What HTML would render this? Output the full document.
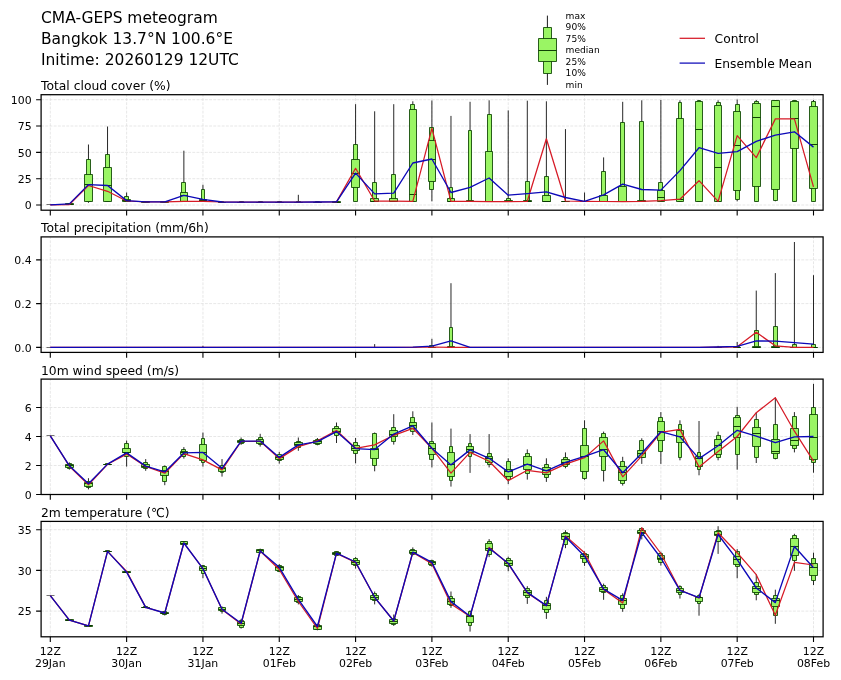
<!DOCTYPE html>
<html lang="en"><head><meta charset="utf-8"><title>CMA-GEPS meteogram</title>
<style>html,body{margin:0;padding:0;background:#fff}svg{display:block;will-change:transform}</style>
</head><body>
<svg width="841" height="680" viewBox="0 0 841 680" font-family='"DejaVu Sans","Liberation Sans",sans-serif'>
<rect width="841" height="680" fill="#fff"/>
<text x="41" y="22.8" font-size="15.48" fill="#000">CMA-GEPS meteogram</text>
<text x="41" y="43.7" font-size="15.48" fill="#000">Bangkok 13.7°N 100.6°E</text>
<text x="41" y="64.6" font-size="15.48" fill="#000">Initime: 20260129 12UTC</text>
<line x1="547.4" x2="547.4" y1="15.6" y2="84.9" stroke="#000" stroke-width="0.9"/>
<path d="M543.5 27.5H551.5V73.5H543.5Z" fill="#9af564" stroke="#0a4200" stroke-opacity="0.85" stroke-width="1"/>
<path d="M538.5 38.5H556.5V61.5H538.5Z" fill="#9af564" stroke="#0a4200" stroke-opacity="0.85" stroke-width="1"/>
<path d="M538.5 50.5H556.5" fill="none" stroke="#083800" stroke-opacity="0.95" stroke-width="1"/>
<text x="565.6" y="18.5" font-size="9.1" fill="#000">max</text>
<text x="565.6" y="30.0" font-size="9.1" fill="#000">90%</text>
<text x="565.6" y="41.6" font-size="9.1" fill="#000">75%</text>
<text x="565.6" y="53.1" font-size="9.1" fill="#000">median</text>
<text x="565.6" y="64.7" font-size="9.1" fill="#000">25%</text>
<text x="565.6" y="76.2" font-size="9.1" fill="#000">10%</text>
<text x="565.6" y="87.8" font-size="9.1" fill="#000">min</text>
<line x1="679.6" x2="705.0" y1="38.3" y2="38.3" stroke="#d61a26" stroke-width="1.25"/>
<line x1="679.6" x2="705.0" y1="63.1" y2="63.1" stroke="#0c08b8" stroke-width="1.25"/>
<text x="714.6" y="42.9" font-size="12.25" fill="#000">Control</text>
<text x="714.6" y="67.5" font-size="12.25" fill="#000">Ensemble Mean</text>
<g>
<text x="41" y="89.6" font-size="12.33" fill="#000">Total cloud cover (%)</text>
<path d="M50.30 210.15V94.7M126.62 210.15V94.7M202.94 210.15V94.7M279.26 210.15V94.7M355.58 210.15V94.7M431.90 210.15V94.7M508.22 210.15V94.7M584.54 210.15V94.7M660.86 210.15V94.7M737.18 210.15V94.7M813.50 210.15V94.7M41.1 205.0H823.15M41.1 178.7H823.15M41.1 152.35H823.15M41.1 126.0H823.15M41.1 99.7H823.15" stroke="#d6d6d6" stroke-width="0.6" stroke-dasharray="2.9 1.3" fill="none"/>
<path d="M69.38 203.3V204.9M88.46 144.5V202.8M107.54 126.5V201.9M126.62 192.5V201.6M145.70 201.3V202.3M164.78 201.3V202.3M183.86 150.7V201.6M202.94 184.8V201.6M222.02 201.5V202.4M241.10 201.1V202.4M260.18 201.1V202.4M279.26 201.1V202.4M298.34 194.8V202.4M317.42 201.5V202.4M336.50 201.5V202.4M355.58 104.2V201.3M374.66 111.3V201.9M393.74 104.2V201.6M412.82 101.3V201.6M431.90 100.5V201.3M450.98 115.9V201.6M470.06 101.8V201.6M489.14 100.3V201.6M508.22 110.4V201.6M527.30 100.7V201.7M546.38 101.3V201.6M565.46 129.1V201.8M584.54 192.5V201.8M603.62 157.4V201.6M622.70 101.8V201.6M641.78 100.3V201.6M660.86 100.0V201.6M679.94 100.3V201.9M699.02 100.3V201.6M718.10 100.3V201.6M737.18 99.5V201.3M756.26 100.0V201.6M775.34 100.0V201.3M794.42 100.3V201.6M813.50 100.0V201.6" stroke="#000" stroke-width="0.85" fill="none"/>
<path d="M67.5 203.5H71.5V204.5H67.5ZM86.5 159.5H90.5V201.5H86.5ZM105.5 154.5H109.5V201.5H105.5ZM124.5 196.5H128.5V201.5H124.5ZM143.5 201.5H147.5V202.5H143.5ZM162.5 201.5H166.5V202.5H162.5ZM181.5 182.5H185.5V201.5H181.5ZM201.5 189.5H204.5V201.5H201.5ZM220.5 201.5H223.5V202.5H220.5ZM239.5 201.5H243.5V202.5H239.5ZM258.5 201.5H262.5V202.5H258.5ZM277.5 201.5H281.5V202.5H277.5ZM296.5 201.5H300.5V202.5H296.5ZM315.5 201.5H319.5V202.5H315.5ZM334.5 201.5H338.5V202.5H334.5ZM353.5 144.5H357.5V201.5H353.5ZM372.5 182.5H376.5V201.5H372.5ZM391.5 174.5H395.5V201.5H391.5ZM410.5 104.5H414.5V201.5H410.5ZM429.5 127.5H433.5V189.5H429.5ZM449.5 187.5H452.5V201.5H449.5ZM468.5 130.5H471.5V201.5H468.5ZM487.5 114.5H491.5V201.5H487.5ZM506.5 198.5H510.5V201.5H506.5ZM525.5 181.5H529.5V201.5H525.5ZM544.5 176.5H548.5V201.5H544.5ZM563.5 201.5H567.5V201.5H563.5ZM582.5 201.5H586.5V201.5H582.5ZM601.5 171.5H605.5V201.5H601.5ZM620.5 122.5H624.5V201.5H620.5ZM639.5 121.5H643.5V201.5H639.5ZM658.5 182.5H662.5V201.5H658.5ZM678.5 102.5H681.5V201.5H678.5ZM697.5 100.5H700.5V201.5H697.5ZM716.5 102.5H720.5V201.5H716.5ZM735.5 104.5H739.5V199.5H735.5ZM754.5 101.5H758.5V201.5H754.5ZM773.5 100.5H777.5V200.5H773.5ZM792.5 100.5H796.5V201.5H792.5ZM811.5 101.5H815.5V201.5H811.5Z" stroke="#0a4200" stroke-opacity="0.85" stroke-width="1" fill="#9af564"/>
<path d="M65.5 203.5H73.5V204.5H65.5ZM84.5 174.5H92.5V201.5H84.5ZM103.5 167.5H111.5V201.5H103.5ZM122.5 199.5H130.5V201.5H122.5ZM141.5 201.5H149.5V202.5H141.5ZM160.5 201.5H168.5V202.5H160.5ZM180.5 192.5H187.5V201.5H180.5ZM199.5 199.5H206.5V201.5H199.5ZM218.5 202.5H225.5V202.5H218.5ZM237.5 202.5H244.5V202.5H237.5ZM256.5 202.5H263.5V202.5H256.5ZM275.5 202.5H283.5V202.5H275.5ZM294.5 202.5H302.5V202.5H294.5ZM313.5 202.5H321.5V202.5H313.5ZM332.5 201.5H340.5V202.5H332.5ZM351.5 159.5H359.5V187.5H351.5ZM370.5 198.5H378.5V201.5H370.5ZM389.5 198.5H397.5V201.5H389.5ZM409.5 109.5H416.5V201.5H409.5ZM428.5 140.5H435.5V181.5H428.5ZM447.5 198.5H454.5V201.5H447.5ZM466.5 200.5H473.5V201.5H466.5ZM485.5 151.5H492.5V201.5H485.5ZM504.5 200.5H512.5V201.5H504.5ZM523.5 200.5H531.5V201.5H523.5ZM542.5 195.5H550.5V201.5H542.5ZM561.5 201.5H569.5V201.5H561.5ZM580.5 201.5H588.5V201.5H580.5ZM599.5 195.5H607.5V201.5H599.5ZM618.5 186.5H626.5V201.5H618.5ZM637.5 200.5H645.5V201.5H637.5ZM657.5 190.5H664.5V201.5H657.5ZM676.5 118.5H683.5V201.5H676.5ZM695.5 101.5H702.5V201.5H695.5ZM714.5 105.5H721.5V201.5H714.5ZM733.5 111.5H740.5V190.5H733.5ZM752.5 103.5H760.5V186.5H752.5ZM771.5 100.5H779.5V189.5H771.5ZM790.5 101.5H798.5V148.5H790.5ZM809.5 106.5H817.5V188.5H809.5Z" stroke="#0a4200" stroke-opacity="0.85" stroke-width="1" fill="#9af564"/>
<path d="M65.5 204.5H73.5M84.5 184.5H92.5M103.5 185.5H111.5M122.5 200.5H130.5M141.5 201.5H149.5M160.5 201.5H168.5M180.5 195.5H187.5M199.5 200.5H206.5M218.5 202.5H225.5M237.5 202.5H244.5M256.5 202.5H263.5M275.5 202.5H283.5M294.5 202.5H302.5M313.5 202.5H321.5M332.5 202.5H340.5M351.5 173.5H359.5M370.5 201.5H378.5M389.5 201.5H397.5M409.5 194.5H416.5M428.5 159.5H435.5M447.5 201.5H454.5M466.5 201.5H473.5M485.5 201.5H492.5M504.5 201.5H512.5M523.5 201.5H531.5M542.5 201.5H550.5M561.5 201.5H569.5M580.5 201.5H588.5M599.5 201.5H607.5M618.5 201.5H626.5M637.5 201.5H645.5M657.5 197.5H664.5M676.5 199.5H683.5M695.5 129.5H702.5M714.5 167.5H721.5M733.5 145.5H740.5M752.5 117.5H760.5M771.5 106.5H779.5M790.5 118.5H798.5M809.5 144.5H817.5" stroke="#083800" stroke-opacity="0.95" stroke-width="1" fill="none"/>
<path d="M46.5 204.5H54.5" stroke="#000" stroke-opacity="0.55" stroke-width="1" fill="none"/>
<polyline points="50.30,204.9 69.38,204.6 88.46,185.5 107.54,191.3 126.62,201.0 145.70,201.9 164.78,201.9 183.86,201.3 202.94,201.3 222.02,202.0 241.10,202.1 260.18,202.1 279.26,202.1 298.34,202.1 317.42,202.0 336.50,201.9 355.58,168.3 374.66,201.0 393.74,201.0 412.82,201.3 431.90,128.3 450.98,201.3 470.06,201.3 489.14,201.7 508.22,201.7 527.30,201.3 546.38,138.8 565.46,201.0 584.54,201.3 603.62,201.5 622.70,201.5 641.78,201.3 660.86,200.6 679.94,199.2 699.02,180.7 718.10,201.3 737.18,135.7 756.26,157.7 775.34,118.9 794.42,118.9 813.50,186.9" stroke="#d61a26" stroke-width="1.25" fill="none" stroke-linejoin="round"/>
<polyline points="50.30,204.9 69.38,203.9 88.46,184.6 107.54,185.5 126.62,200.6 145.70,201.9 164.78,201.9 183.86,195.3 202.94,199.3 222.02,202.0 241.10,202.1 260.18,202.1 279.26,202.1 298.34,202.1 317.42,202.0 336.50,201.9 355.58,173.1 374.66,193.9 393.74,193.1 412.82,163.0 431.90,159.0 450.98,192.5 470.06,187.4 489.14,178.0 508.22,195.2 527.30,193.6 546.38,191.8 565.46,197.5 584.54,201.3 603.62,194.8 622.70,184.2 641.78,189.5 660.86,190.1 679.94,170.6 699.02,147.7 718.10,153.3 737.18,151.6 756.26,141.3 775.34,135.1 794.42,131.8 813.50,147.1" stroke="#0c08b8" stroke-width="1.35" fill="none" stroke-linejoin="round"/>
<rect x="41.1" y="94.7" width="782.0" height="115.5" fill="none" stroke="#000" stroke-width="1.25"/>
<path d="M50.30 210.15v5.3M126.62 210.15v5.3M202.94 210.15v5.3M279.26 210.15v5.3M355.58 210.15v5.3M431.90 210.15v5.3M508.22 210.15v5.3M584.54 210.15v5.3M660.86 210.15v5.3M737.18 210.15v5.3M813.50 210.15v5.3M41.1 205.0h-5.0M41.1 178.7h-5.0M41.1 152.35h-5.0M41.1 126.0h-5.0M41.1 99.7h-5.0" stroke="#000" stroke-width="1.1" fill="none"/>
<text x="31.6" y="209.2" font-size="10.9" text-anchor="end" fill="#000">0</text>
<text x="31.6" y="182.9" font-size="10.9" text-anchor="end" fill="#000">25</text>
<text x="31.6" y="156.5" font-size="10.9" text-anchor="end" fill="#000">50</text>
<text x="31.6" y="130.2" font-size="10.9" text-anchor="end" fill="#000">75</text>
<text x="31.6" y="103.9" font-size="10.9" text-anchor="end" fill="#000">100</text>
</g>
<g>
<text x="41" y="231.75" font-size="12.33" fill="#000">Total precipitation (mm/6h)</text>
<path d="M50.30 352.4V236.9M126.62 352.4V236.9M202.94 352.4V236.9M279.26 352.4V236.9M355.58 352.4V236.9M431.90 352.4V236.9M508.22 352.4V236.9M584.54 352.4V236.9M660.86 352.4V236.9M737.18 352.4V236.9M813.50 352.4V236.9M41.1 347.4H823.15M41.1 303.6H823.15M41.1 259.9H823.15" stroke="#d6d6d6" stroke-width="0.6" stroke-dasharray="2.9 1.3" fill="none"/>
<path d="M202.94 345.8V347.3M374.66 344.1V347.3M431.90 338.8V347.3M450.98 283.2V347.3M718.10 345.9V347.3M737.18 342.0V347.3M756.26 290.6V347.3M775.34 273.1V347.3M794.42 242.0V347.3M813.50 275.2V347.3" stroke="#000" stroke-width="0.85" fill="none"/>
<path d="M201.5 347.5H204.5V347.5H201.5ZM372.5 347.5H376.5V347.5H372.5ZM429.5 345.5H433.5V347.5H429.5ZM449.5 327.5H452.5V347.5H449.5ZM716.5 347.5H720.5V347.5H716.5ZM735.5 346.5H739.5V347.5H735.5ZM754.5 330.5H758.5V347.5H754.5ZM773.5 326.5H777.5V347.5H773.5ZM792.5 344.5H796.5V347.5H792.5ZM811.5 344.5H815.5V347.5H811.5Z" stroke="#0a4200" stroke-opacity="0.85" stroke-width="1" fill="#9af564"/>
<path d="M199.5 347.5H206.5V347.5H199.5ZM370.5 347.5H378.5V347.5H370.5ZM428.5 347.5H435.5V347.5H428.5ZM447.5 346.5H454.5V347.5H447.5ZM714.5 347.5H721.5V347.5H714.5ZM733.5 347.5H740.5V347.5H733.5ZM752.5 346.5H760.5V347.5H752.5ZM771.5 346.5H779.5V347.5H771.5ZM790.5 347.5H798.5V347.5H790.5ZM809.5 347.5H817.5V347.5H809.5Z" stroke="#0a4200" stroke-opacity="0.85" stroke-width="1" fill="#9af564"/>
<path d="M199.5 347.5H206.5M370.5 347.5H378.5M428.5 347.5H435.5M447.5 347.5H454.5M714.5 347.5H721.5M733.5 347.5H740.5M752.5 347.5H760.5M771.5 347.5H779.5M790.5 347.5H798.5M809.5 347.5H817.5" stroke="#083800" stroke-opacity="0.95" stroke-width="1" fill="none"/>
<path d="M46.5 347.5H54.5M65.5 347.5H73.5M84.5 347.5H92.5M103.5 347.5H111.5M122.5 347.5H130.5M141.5 347.5H149.5M160.5 347.5H168.5M180.5 347.5H187.5M218.5 347.5H225.5M237.5 347.5H244.5M256.5 347.5H263.5M275.5 347.5H283.5M294.5 347.5H302.5M313.5 347.5H321.5M332.5 347.5H340.5M351.5 347.5H359.5M389.5 347.5H397.5M409.5 347.5H416.5M466.5 347.5H473.5M485.5 347.5H492.5M504.5 347.5H512.5M523.5 347.5H531.5M542.5 347.5H550.5M561.5 347.5H569.5M580.5 347.5H588.5M599.5 347.5H607.5M618.5 347.5H626.5M637.5 347.5H645.5M657.5 347.5H664.5M676.5 347.5H683.5M695.5 347.5H702.5" stroke="#000" stroke-opacity="0.55" stroke-width="1" fill="none"/>
<polyline points="50.30,347.3 69.38,347.3 88.46,347.3 107.54,347.3 126.62,347.3 145.70,347.3 164.78,347.3 183.86,347.3 202.94,347.3 222.02,347.3 241.10,347.3 260.18,347.3 279.26,347.3 298.34,347.3 317.42,347.3 336.50,347.3 355.58,347.3 374.66,347.3 393.74,347.3 412.82,347.3 431.90,347.0 450.98,347.3 470.06,347.3 489.14,347.3 508.22,347.3 527.30,347.3 546.38,347.3 565.46,347.3 584.54,347.3 603.62,347.3 622.70,347.3 641.78,347.3 660.86,347.3 679.94,347.3 699.02,347.3 718.10,347.1 737.18,346.8 756.26,332.3 775.34,345.8 794.42,347.3 813.50,347.3" stroke="#d61a26" stroke-width="1.25" fill="none" stroke-linejoin="round"/>
<polyline points="50.30,347.3 69.38,347.3 88.46,347.3 107.54,347.3 126.62,347.3 145.70,347.3 164.78,347.3 183.86,347.3 202.94,347.3 222.02,347.3 241.10,347.3 260.18,347.3 279.26,347.3 298.34,347.3 317.42,347.3 336.50,347.3 355.58,347.3 374.66,347.3 393.74,347.3 412.82,347.1 431.90,346.2 450.98,340.9 470.06,347.3 489.14,347.3 508.22,347.3 527.30,347.3 546.38,347.3 565.46,347.3 584.54,347.3 603.62,347.3 622.70,347.3 641.78,347.3 660.86,347.3 679.94,347.3 699.02,347.3 718.10,347.0 737.18,346.4 756.26,340.9 775.34,341.1 794.42,342.7 813.50,344.1" stroke="#0c08b8" stroke-width="1.35" fill="none" stroke-linejoin="round"/>
<rect x="41.1" y="236.9" width="782.0" height="115.5" fill="none" stroke="#000" stroke-width="1.25"/>
<path d="M50.30 352.4v5.3M126.62 352.4v5.3M202.94 352.4v5.3M279.26 352.4v5.3M355.58 352.4v5.3M431.90 352.4v5.3M508.22 352.4v5.3M584.54 352.4v5.3M660.86 352.4v5.3M737.18 352.4v5.3M813.50 352.4v5.3M41.1 347.4h-5.0M41.1 303.6h-5.0M41.1 259.9h-5.0" stroke="#000" stroke-width="1.1" fill="none"/>
<text x="31.6" y="351.6" font-size="10.9" text-anchor="end" fill="#000">0.0</text>
<text x="31.6" y="307.8" font-size="10.9" text-anchor="end" fill="#000">0.2</text>
<text x="31.6" y="264.1" font-size="10.9" text-anchor="end" fill="#000">0.4</text>
</g>
<g>
<text x="41" y="374.55" font-size="12.33" fill="#000">10m wind speed (m/s)</text>
<path d="M50.30 494.55V379.1M126.62 494.55V379.1M202.94 494.55V379.1M279.26 494.55V379.1M355.58 494.55V379.1M431.90 494.55V379.1M508.22 494.55V379.1M584.54 494.55V379.1M660.86 494.55V379.1M737.18 494.55V379.1M813.50 494.55V379.1M41.1 465.5H823.15M41.1 436.5H823.15M41.1 407.5H823.15" stroke="#d6d6d6" stroke-width="0.6" stroke-dasharray="2.9 1.3" fill="none"/>
<path d="M69.38 462.4V469.6M88.46 478.2V489.4M107.54 463.6V464.8M126.62 440.5V466.6M145.70 459.1V470.8M164.78 465.4V485.2M183.86 447.1V458.6M202.94 432.5V466.6M222.02 459.1V476.6M241.10 437.5V444.9M260.18 433.8V446.6M279.26 451.9V463.6M298.34 437.5V450.8M317.42 438.0V445.3M336.50 422.5V443.0M355.58 438.0V463.3M374.66 432.5V471.3M393.74 414.2V444.6M412.82 411.3V435.0M431.90 422.5V467.4M450.98 428.6V486.6M470.06 434.1V472.9M489.14 434.1V467.4M508.22 458.3V484.1M527.30 449.4V479.6M546.38 458.3V481.9M565.46 452.4V468.3M584.54 420.3V479.8M603.62 431.6V481.5M622.70 456.8V485.6M641.78 438.3V463.9M660.86 412.1V463.9M679.94 420.3V460.3M699.02 421.0V475.3M718.10 431.6V460.3M737.18 406.8V469.7M756.26 412.7V463.0M775.34 397.7V459.4M794.42 412.1V452.4M813.50 383.9V472.7" stroke="#000" stroke-width="0.85" fill="none"/>
<path d="M67.5 463.5H71.5V468.5H67.5ZM86.5 481.5H90.5V487.5H86.5ZM105.5 463.5H109.5V464.5H105.5ZM124.5 443.5H128.5V456.5H124.5ZM143.5 462.5H147.5V468.5H143.5ZM162.5 466.5H166.5V481.5H162.5ZM181.5 449.5H185.5V456.5H181.5ZM201.5 438.5H204.5V462.5H201.5ZM220.5 465.5H223.5V472.5H220.5ZM239.5 439.5H243.5V443.5H239.5ZM258.5 437.5H262.5V444.5H258.5ZM277.5 454.5H281.5V460.5H277.5ZM296.5 441.5H300.5V447.5H296.5ZM315.5 439.5H319.5V444.5H315.5ZM334.5 426.5H338.5V435.5H334.5ZM353.5 442.5H357.5V453.5H353.5ZM372.5 433.5H376.5V465.5H372.5ZM391.5 427.5H395.5V441.5H391.5ZM410.5 417.5H414.5V431.5H410.5ZM429.5 441.5H433.5V459.5H429.5ZM449.5 446.5H452.5V480.5H449.5ZM468.5 443.5H471.5V456.5H468.5ZM487.5 453.5H491.5V464.5H487.5ZM506.5 461.5H510.5V479.5H506.5ZM525.5 453.5H529.5V473.5H525.5ZM544.5 464.5H548.5V477.5H544.5ZM563.5 457.5H567.5V466.5H563.5ZM582.5 428.5H586.5V478.5H582.5ZM601.5 433.5H605.5V470.5H601.5ZM620.5 461.5H624.5V483.5H620.5ZM639.5 440.5H643.5V457.5H639.5ZM658.5 417.5H662.5V451.5H658.5ZM678.5 424.5H681.5V457.5H678.5ZM697.5 452.5H700.5V469.5H697.5ZM716.5 435.5H720.5V457.5H716.5ZM735.5 415.5H739.5V454.5H735.5ZM754.5 419.5H758.5V457.5H754.5ZM773.5 424.5H777.5V458.5H773.5ZM792.5 416.5H796.5V448.5H792.5ZM811.5 407.5H815.5V462.5H811.5Z" stroke="#0a4200" stroke-opacity="0.85" stroke-width="1" fill="#9af564"/>
<path d="M65.5 464.5H73.5V467.5H65.5ZM84.5 482.5H92.5V486.5H84.5ZM103.5 464.5H111.5V464.5H103.5ZM122.5 448.5H130.5V452.5H122.5ZM141.5 464.5H149.5V467.5H141.5ZM160.5 470.5H168.5V475.5H160.5ZM180.5 451.5H187.5V454.5H180.5ZM199.5 444.5H206.5V460.5H199.5ZM218.5 467.5H225.5V471.5H218.5ZM237.5 440.5H244.5V442.5H237.5ZM256.5 439.5H263.5V443.5H256.5ZM275.5 456.5H283.5V459.5H275.5ZM294.5 442.5H302.5V445.5H294.5ZM313.5 440.5H321.5V443.5H313.5ZM332.5 428.5H340.5V432.5H332.5ZM351.5 445.5H359.5V450.5H351.5ZM370.5 448.5H378.5V458.5H370.5ZM389.5 430.5H397.5V436.5H389.5ZM409.5 422.5H416.5V428.5H409.5ZM428.5 443.5H435.5V454.5H428.5ZM447.5 452.5H454.5V476.5H447.5ZM466.5 446.5H473.5V452.5H466.5ZM485.5 456.5H492.5V462.5H485.5ZM504.5 469.5H512.5V476.5H504.5ZM523.5 456.5H531.5V469.5H523.5ZM542.5 467.5H550.5V474.5H542.5ZM561.5 459.5H569.5V464.5H561.5ZM580.5 445.5H588.5V471.5H580.5ZM599.5 437.5H607.5V456.5H599.5ZM618.5 466.5H626.5V480.5H618.5ZM637.5 450.5H645.5V457.5H637.5ZM657.5 421.5H664.5V440.5H657.5ZM676.5 430.5H683.5V442.5H676.5ZM695.5 456.5H702.5V466.5H695.5ZM714.5 439.5H721.5V454.5H714.5ZM733.5 417.5H740.5V437.5H733.5ZM752.5 427.5H760.5V446.5H752.5ZM771.5 439.5H779.5V453.5H771.5ZM790.5 428.5H798.5V445.5H790.5ZM809.5 414.5H817.5V459.5H809.5Z" stroke="#0a4200" stroke-opacity="0.85" stroke-width="1" fill="#9af564"/>
<path d="M65.5 465.5H73.5M84.5 483.5H92.5M103.5 464.5H111.5M122.5 452.5H130.5M141.5 466.5H149.5M160.5 471.5H168.5M180.5 452.5H187.5M199.5 452.5H206.5M218.5 468.5H225.5M237.5 441.5H244.5M256.5 441.5H263.5M275.5 457.5H283.5M294.5 444.5H302.5M313.5 441.5H321.5M332.5 431.5H340.5M351.5 448.5H359.5M370.5 449.5H378.5M389.5 434.5H397.5M409.5 425.5H416.5M428.5 448.5H435.5M447.5 464.5H454.5M466.5 449.5H473.5M485.5 458.5H492.5M504.5 471.5H512.5M523.5 464.5H531.5M542.5 470.5H550.5M561.5 462.5H569.5M580.5 456.5H588.5M599.5 449.5H607.5M618.5 472.5H626.5M637.5 453.5H645.5M657.5 431.5H664.5M676.5 436.5H683.5M695.5 458.5H702.5M714.5 445.5H721.5M733.5 426.5H740.5M752.5 433.5H760.5M771.5 451.5H779.5M790.5 440.5H798.5M809.5 437.5H817.5" stroke="#083800" stroke-opacity="0.95" stroke-width="1" fill="none"/>
<path d="M46.5 435.5H54.5" stroke="#000" stroke-opacity="0.55" stroke-width="1" fill="none"/>
<polyline points="50.30,435.8 69.38,466.2 88.46,484.9 107.54,464.3 126.62,454.1 145.70,466.5 164.78,473.2 183.86,453.6 202.94,459.9 222.02,469.9 241.10,441.5 260.18,441.3 279.26,458.6 298.34,446.6 317.42,440.8 336.50,430.5 355.58,448.3 374.66,444.9 393.74,435.3 412.82,428.3 431.90,448.3 450.98,473.2 470.06,452.4 489.14,461.3 508.22,480.7 527.30,470.3 546.38,472.9 565.46,464.1 584.54,457.7 603.62,440.9 622.70,476.8 641.78,455.9 660.86,432.4 679.94,429.4 699.02,466.9 718.10,451.5 737.18,436.5 756.26,412.7 775.34,397.7 794.42,431.2 813.50,461.2" stroke="#d61a26" stroke-width="1.25" fill="none" stroke-linejoin="round"/>
<polyline points="50.30,435.8 69.38,465.8 88.46,483.7 107.54,464.1 126.62,452.9 145.70,466.1 164.78,471.9 183.86,452.9 202.94,452.4 222.02,468.3 241.10,441.1 260.18,441.1 279.26,457.4 298.34,444.9 317.42,441.6 336.50,431.6 355.58,448.6 374.66,449.6 393.74,434.1 412.82,425.8 431.90,448.3 450.98,464.9 470.06,449.9 489.14,458.3 508.22,471.9 527.30,464.1 546.38,470.8 565.46,462.4 584.54,456.3 603.62,449.7 622.70,472.7 641.78,453.3 660.86,431.7 679.94,436.9 699.02,458.6 718.10,445.7 737.18,430.3 756.26,436.1 775.34,442.7 794.42,436.9 813.50,436.5" stroke="#0c08b8" stroke-width="1.35" fill="none" stroke-linejoin="round"/>
<rect x="41.1" y="379.1" width="782.0" height="115.4" fill="none" stroke="#000" stroke-width="1.25"/>
<path d="M50.30 494.55v5.3M126.62 494.55v5.3M202.94 494.55v5.3M279.26 494.55v5.3M355.58 494.55v5.3M431.90 494.55v5.3M508.22 494.55v5.3M584.54 494.55v5.3M660.86 494.55v5.3M737.18 494.55v5.3M813.50 494.55v5.3M41.1 494.5h-5.0M41.1 465.5h-5.0M41.1 436.5h-5.0M41.1 407.5h-5.0" stroke="#000" stroke-width="1.1" fill="none"/>
<text x="31.6" y="498.7" font-size="10.9" text-anchor="end" fill="#000">0</text>
<text x="31.6" y="469.7" font-size="10.9" text-anchor="end" fill="#000">2</text>
<text x="31.6" y="440.7" font-size="10.9" text-anchor="end" fill="#000">4</text>
<text x="31.6" y="411.7" font-size="10.9" text-anchor="end" fill="#000">6</text>
</g>
<g>
<text x="41" y="516.6" font-size="12.33" fill="#000">2m temperature (℃)</text>
<path d="M50.30 636.75V521.4M126.62 636.75V521.4M202.94 636.75V521.4M279.26 636.75V521.4M355.58 636.75V521.4M431.90 636.75V521.4M508.22 636.75V521.4M584.54 636.75V521.4M660.86 636.75V521.4M737.18 636.75V521.4M813.50 636.75V521.4M41.1 611.1H823.15M41.1 570.4H823.15M41.1 529.7H823.15" stroke="#d6d6d6" stroke-width="0.6" stroke-dasharray="2.9 1.3" fill="none"/>
<path d="M69.38 619.2V621.0M88.46 625.0V626.8M107.54 550.5V552.3M126.62 571.2V573.0M145.70 606.5V608.3M164.78 611.0V615.5M183.86 541.0V545.0M202.94 565.0V578.3M222.02 606.5V613.6M241.10 618.9V628.6M260.18 548.6V553.5M279.26 564.1V572.1M298.34 595.0V604.4M317.42 623.8V630.3M336.50 551.4V555.5M355.58 557.1V568.6M374.66 591.5V604.4M393.74 614.5V625.9M412.82 547.4V555.3M431.90 559.7V566.8M450.98 591.5V607.9M470.06 610.4V631.6M489.14 539.1V557.1M508.22 556.7V571.2M527.30 586.2V603.9M546.38 596.8V618.9M565.46 530.2V548.2M584.54 551.4V565.9M603.62 583.6V599.8M622.70 593.3V611.8M641.78 527.4V539.4M660.86 551.8V565.6M679.94 585.3V598.6M699.02 594.2V615.7M718.10 526.2V553.9M737.18 549.1V578.3M756.26 574.4V600.3M775.34 589.7V623.8M794.42 533.8V570.8M813.50 552.7V585.0" stroke="#000" stroke-width="0.85" fill="none"/>
<path d="M67.5 619.5H71.5V620.5H67.5ZM86.5 625.5H90.5V626.5H86.5ZM105.5 550.5H109.5V551.5H105.5ZM124.5 571.5H128.5V572.5H124.5ZM143.5 606.5H147.5V607.5H143.5ZM162.5 611.5H166.5V614.5H162.5ZM181.5 541.5H185.5V544.5H181.5ZM201.5 565.5H204.5V573.5H201.5ZM220.5 607.5H223.5V611.5H220.5ZM239.5 620.5H243.5V627.5H239.5ZM258.5 549.5H262.5V552.5H258.5ZM277.5 565.5H281.5V571.5H277.5ZM296.5 596.5H300.5V602.5H296.5ZM315.5 624.5H319.5V629.5H315.5ZM334.5 551.5H338.5V555.5H334.5ZM353.5 558.5H357.5V565.5H353.5ZM372.5 593.5H376.5V600.5H372.5ZM391.5 618.5H395.5V624.5H391.5ZM410.5 549.5H414.5V554.5H410.5ZM429.5 560.5H433.5V565.5H429.5ZM449.5 596.5H452.5V605.5H449.5ZM468.5 611.5H471.5V625.5H468.5ZM487.5 541.5H491.5V554.5H487.5ZM506.5 558.5H510.5V566.5H506.5ZM525.5 588.5H529.5V597.5H525.5ZM544.5 600.5H548.5V612.5H544.5ZM563.5 532.5H567.5V544.5H563.5ZM582.5 553.5H586.5V562.5H582.5ZM601.5 585.5H605.5V592.5H601.5ZM620.5 595.5H624.5V608.5H620.5ZM639.5 528.5H643.5V535.5H639.5ZM658.5 553.5H662.5V562.5H658.5ZM678.5 586.5H681.5V594.5H678.5ZM697.5 595.5H700.5V603.5H697.5ZM716.5 530.5H720.5V541.5H716.5ZM735.5 551.5H739.5V566.5H735.5ZM754.5 582.5H758.5V594.5H754.5ZM773.5 595.5H777.5V615.5H773.5ZM792.5 535.5H796.5V560.5H792.5ZM811.5 558.5H815.5V580.5H811.5Z" stroke="#0a4200" stroke-opacity="0.85" stroke-width="1" fill="#9af564"/>
<path d="M65.5 619.5H73.5V620.5H65.5ZM84.5 625.5H92.5V626.5H84.5ZM103.5 551.5H111.5V551.5H103.5ZM122.5 571.5H130.5V572.5H122.5ZM141.5 607.5H149.5V607.5H141.5ZM160.5 612.5H168.5V613.5H160.5ZM180.5 541.5H187.5V544.5H180.5ZM199.5 566.5H206.5V570.5H199.5ZM218.5 607.5H225.5V610.5H218.5ZM237.5 621.5H244.5V625.5H237.5ZM256.5 549.5H263.5V552.5H256.5ZM275.5 566.5H283.5V570.5H275.5ZM294.5 597.5H302.5V601.5H294.5ZM313.5 625.5H321.5V629.5H313.5ZM332.5 552.5H340.5V554.5H332.5ZM351.5 560.5H359.5V564.5H351.5ZM370.5 595.5H378.5V599.5H370.5ZM389.5 619.5H397.5V623.5H389.5ZM409.5 550.5H416.5V553.5H409.5ZM428.5 561.5H435.5V564.5H428.5ZM447.5 598.5H454.5V604.5H447.5ZM466.5 615.5H473.5V622.5H466.5ZM485.5 543.5H492.5V550.5H485.5ZM504.5 560.5H512.5V565.5H504.5ZM523.5 590.5H531.5V595.5H523.5ZM542.5 603.5H550.5V609.5H542.5ZM561.5 533.5H569.5V539.5H561.5ZM580.5 554.5H588.5V558.5H580.5ZM599.5 587.5H607.5V591.5H599.5ZM618.5 598.5H626.5V604.5H618.5ZM637.5 530.5H645.5V533.5H637.5ZM657.5 555.5H664.5V559.5H657.5ZM676.5 588.5H683.5V592.5H676.5ZM695.5 597.5H702.5V601.5H695.5ZM714.5 531.5H721.5V535.5H714.5ZM733.5 556.5H740.5V564.5H733.5ZM752.5 586.5H760.5V592.5H752.5ZM771.5 598.5H779.5V606.5H771.5ZM790.5 538.5H798.5V555.5H790.5ZM809.5 563.5H817.5V575.5H809.5Z" stroke="#0a4200" stroke-opacity="0.85" stroke-width="1" fill="#9af564"/>
<path d="M65.5 620.5H73.5M84.5 625.5H92.5M103.5 551.5H111.5M122.5 572.5H130.5M141.5 607.5H149.5M160.5 613.5H168.5M180.5 543.5H187.5M199.5 568.5H206.5M218.5 609.5H225.5M237.5 623.5H244.5M256.5 550.5H263.5M275.5 567.5H283.5M294.5 599.5H302.5M313.5 626.5H321.5M332.5 553.5H340.5M351.5 562.5H359.5M370.5 597.5H378.5M389.5 621.5H397.5M409.5 552.5H416.5M428.5 562.5H435.5M447.5 601.5H454.5M466.5 616.5H473.5M485.5 548.5H492.5M504.5 563.5H512.5M523.5 592.5H531.5M542.5 605.5H550.5M561.5 536.5H569.5M580.5 556.5H588.5M599.5 589.5H607.5M618.5 600.5H626.5M637.5 532.5H645.5M657.5 558.5H664.5M676.5 590.5H683.5M695.5 597.5H702.5M714.5 534.5H721.5M733.5 559.5H740.5M752.5 588.5H760.5M771.5 600.5H779.5M790.5 546.5H798.5M809.5 567.5H817.5" stroke="#083800" stroke-opacity="0.95" stroke-width="1" fill="none"/>
<path d="M46.5 595.5H54.5" stroke="#000" stroke-opacity="0.55" stroke-width="1" fill="none"/>
<polyline points="50.30,595.6 69.38,620.1 88.46,625.9 107.54,551.4 126.62,571.4 145.70,607.4 164.78,613.0 183.86,543.0 202.94,568.6 222.02,609.6 241.10,624.0 260.18,551.0 279.26,569.5 298.34,601.5 317.42,628.5 336.50,553.4 355.58,562.4 374.66,597.3 393.74,621.0 412.82,552.5 431.90,563.8 450.98,603.9 470.06,616.6 489.14,547.4 508.22,563.7 527.30,592.9 546.38,605.8 565.46,535.9 584.54,552.7 603.62,589.6 622.70,603.0 641.78,527.9 660.86,553.5 679.94,590.0 699.02,598.0 718.10,532.7 737.18,552.7 756.26,574.7 775.34,615.3 794.42,562.4 813.50,565.0" stroke="#d61a26" stroke-width="1.25" fill="none" stroke-linejoin="round"/>
<polyline points="50.30,595.6 69.38,620.1 88.46,625.9 107.54,551.4 126.62,572.1 145.70,607.4 164.78,613.0 183.86,543.0 202.94,568.6 222.02,609.2 241.10,623.3 260.18,550.9 279.26,567.3 298.34,599.4 317.42,626.5 336.50,553.2 355.58,562.0 374.66,597.3 393.74,621.0 412.82,552.1 431.90,562.4 450.98,601.6 470.06,616.2 489.14,548.2 508.22,563.3 527.30,592.4 546.38,605.6 565.46,536.8 584.54,556.2 603.62,589.2 622.70,600.3 641.78,532.7 660.86,558.0 679.94,590.3 699.02,597.7 718.10,534.5 737.18,559.7 756.26,588.0 775.34,602.6 794.42,546.5 813.50,567.7" stroke="#0c08b8" stroke-width="1.35" fill="none" stroke-linejoin="round"/>
<rect x="41.1" y="521.4" width="782.0" height="115.4" fill="none" stroke="#000" stroke-width="1.25"/>
<path d="M50.30 636.75v5.3M126.62 636.75v5.3M202.94 636.75v5.3M279.26 636.75v5.3M355.58 636.75v5.3M431.90 636.75v5.3M508.22 636.75v5.3M584.54 636.75v5.3M660.86 636.75v5.3M737.18 636.75v5.3M813.50 636.75v5.3M41.1 611.1h-5.0M41.1 570.4h-5.0M41.1 529.7h-5.0" stroke="#000" stroke-width="1.1" fill="none"/>
<text x="31.6" y="615.3" font-size="10.9" text-anchor="end" fill="#000">25</text>
<text x="31.6" y="574.6" font-size="10.9" text-anchor="end" fill="#000">30</text>
<text x="31.6" y="533.9" font-size="10.9" text-anchor="end" fill="#000">35</text>
<text x="50.3" y="654.6" font-size="10.9" text-anchor="middle" fill="#000">12Z</text>
<text x="50.3" y="666.8" font-size="10.9" text-anchor="middle" fill="#000">29Jan</text>
<text x="126.6" y="654.6" font-size="10.9" text-anchor="middle" fill="#000">12Z</text>
<text x="126.6" y="666.8" font-size="10.9" text-anchor="middle" fill="#000">30Jan</text>
<text x="202.9" y="654.6" font-size="10.9" text-anchor="middle" fill="#000">12Z</text>
<text x="202.9" y="666.8" font-size="10.9" text-anchor="middle" fill="#000">31Jan</text>
<text x="279.3" y="654.6" font-size="10.9" text-anchor="middle" fill="#000">12Z</text>
<text x="279.3" y="666.8" font-size="10.9" text-anchor="middle" fill="#000">01Feb</text>
<text x="355.6" y="654.6" font-size="10.9" text-anchor="middle" fill="#000">12Z</text>
<text x="355.6" y="666.8" font-size="10.9" text-anchor="middle" fill="#000">02Feb</text>
<text x="431.9" y="654.6" font-size="10.9" text-anchor="middle" fill="#000">12Z</text>
<text x="431.9" y="666.8" font-size="10.9" text-anchor="middle" fill="#000">03Feb</text>
<text x="508.2" y="654.6" font-size="10.9" text-anchor="middle" fill="#000">12Z</text>
<text x="508.2" y="666.8" font-size="10.9" text-anchor="middle" fill="#000">04Feb</text>
<text x="584.5" y="654.6" font-size="10.9" text-anchor="middle" fill="#000">12Z</text>
<text x="584.5" y="666.8" font-size="10.9" text-anchor="middle" fill="#000">05Feb</text>
<text x="660.9" y="654.6" font-size="10.9" text-anchor="middle" fill="#000">12Z</text>
<text x="660.9" y="666.8" font-size="10.9" text-anchor="middle" fill="#000">06Feb</text>
<text x="737.2" y="654.6" font-size="10.9" text-anchor="middle" fill="#000">12Z</text>
<text x="737.2" y="666.8" font-size="10.9" text-anchor="middle" fill="#000">07Feb</text>
<text x="813.5" y="654.6" font-size="10.9" text-anchor="middle" fill="#000">12Z</text>
<text x="813.5" y="666.8" font-size="10.9" text-anchor="middle" fill="#000">08Feb</text>
</g>
</svg>
</body></html>
